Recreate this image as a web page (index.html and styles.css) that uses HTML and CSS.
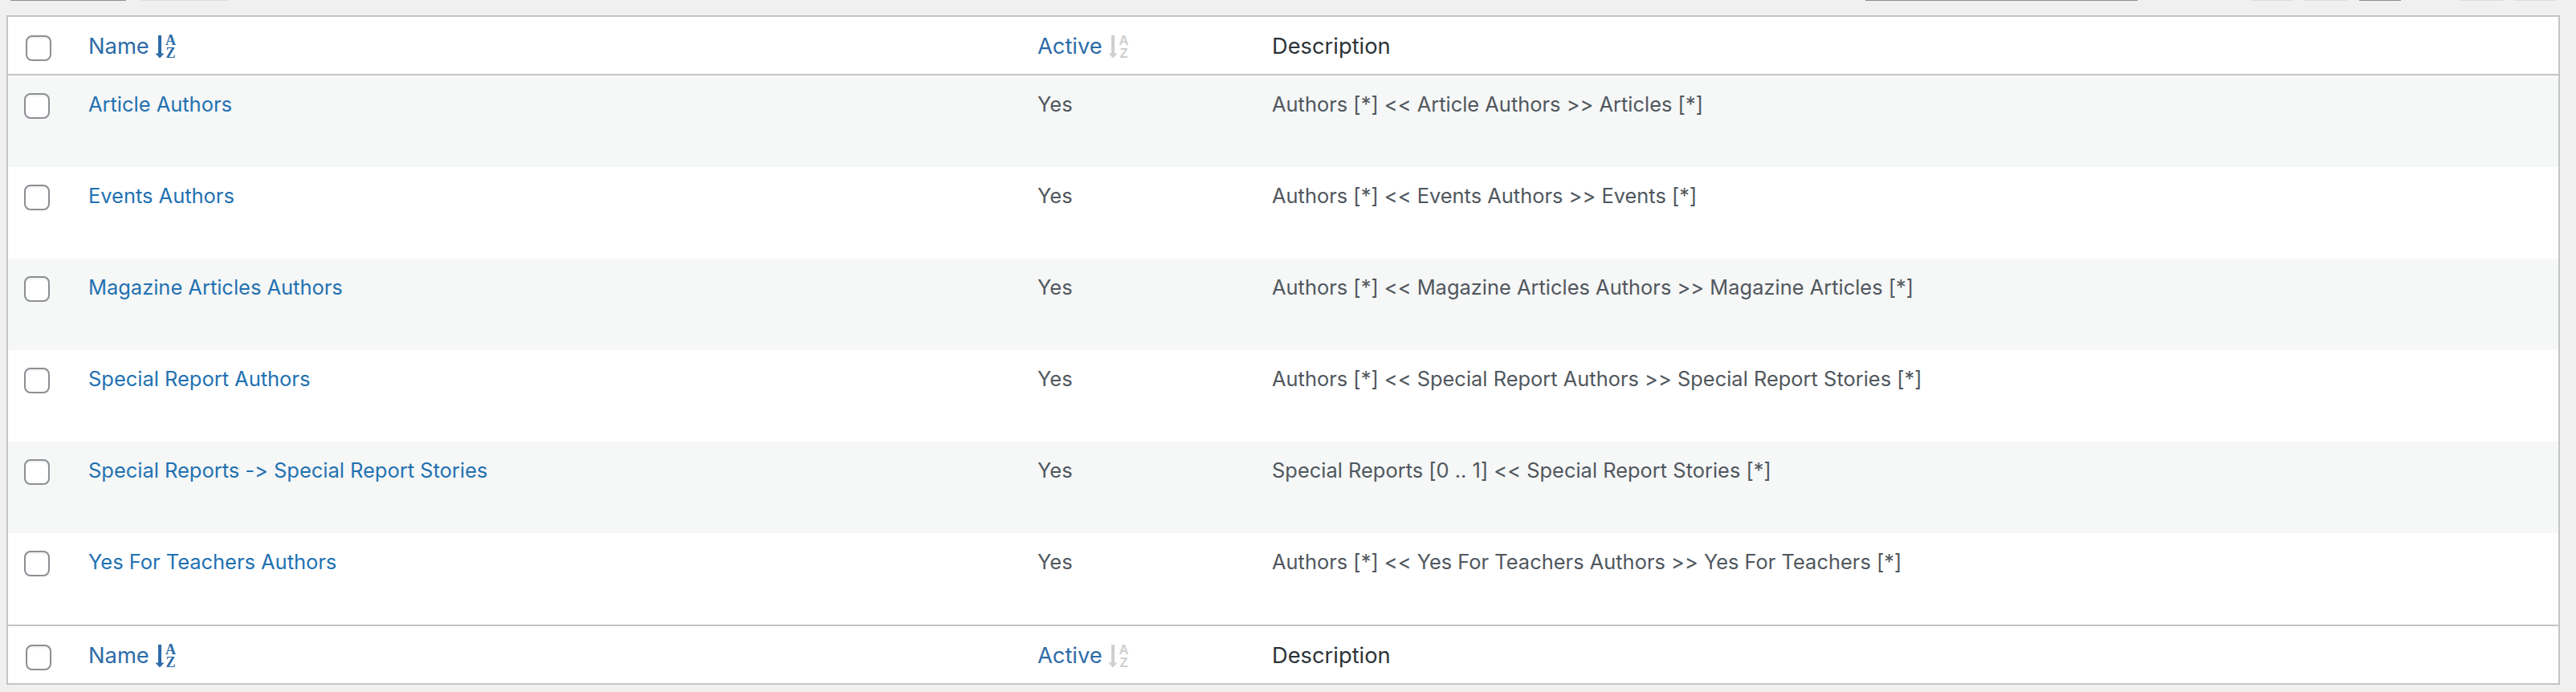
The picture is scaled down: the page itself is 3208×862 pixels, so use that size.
FILE: index.html
```html
<!DOCTYPE html>
<html lang="en">
<head>
<meta charset="utf-8">
<title>Relationships</title>
<link rel="stylesheet" href="styles.css">
</head>
<body>
<div class="page">
  <div class="tablenav-edge">
    <span class="edge edge-dark edge-a"></span>
    <span class="edge edge-light edge-b"></span>
    <span class="edge edge-dark edge-c"></span>
    <span class="edge edge-light edge-d"></span>
    <span class="edge edge-light edge-e"></span>
    <span class="edge edge-dark edge-f"></span>
    <span class="edge edge-light edge-g"></span>
    <span class="edge edge-light edge-e"></span>
  </div>
  <table class="list">
    <colgroup>
      <col class="col-check"><col class="col-name"><col class="col-active"><col class="col-desc">
    </colgroup>
    <thead>
      <tr>
        <th class="check"><input class="box" type="checkbox" aria-label="Select all"></th>
        <th><a class="sort" href="#">Name<svg class="sort-icon" viewBox="0 -6 28 42"><path d="M4 1h4v22.500h3.500L6 29.500 .5 23.500H4z" fill="currentColor"/><text x="19.500" y="13" class="glyph-serif" text-anchor="middle">A</text><text x="19.500" y="29" class="glyph-serif" text-anchor="middle">Z</text></svg></a></th>
        <th><a class="sort" href="#">Active<svg class="sort-icon sort-icon-off" viewBox="0 -6 28 42"><path d="M4 1h4v22.500h3.500L6 29.500 .5 23.500H4z" fill="currentColor"/><text x="19.500" y="13" class="glyph-sans" text-anchor="middle">A</text><text x="19.500" y="29" class="glyph-sans" text-anchor="middle">Z</text></svg></a></th>
        <th class="plain">Description</th>
      </tr>
    </thead>
    <tbody>
      <tr>
        <td class="check"><input class="box" type="checkbox" aria-label="Select"></td>
        <td><a class="rowlink" href="#">Article Authors</a></td>
        <td>Yes</td>
        <td>Authors [*] &lt;&lt; Article Authors &gt;&gt; Articles [*]</td>
      </tr>
      <tr>
        <td class="check"><input class="box" type="checkbox" aria-label="Select"></td>
        <td><a class="rowlink" href="#">Events Authors</a></td>
        <td>Yes</td>
        <td>Authors [*] &lt;&lt; Events Authors &gt;&gt; Events [*]</td>
      </tr>
      <tr>
        <td class="check"><input class="box" type="checkbox" aria-label="Select"></td>
        <td><a class="rowlink" href="#">Magazine Articles Authors</a></td>
        <td>Yes</td>
        <td>Authors [*] &lt;&lt; Magazine Articles Authors &gt;&gt; Magazine Articles [*]</td>
      </tr>
      <tr>
        <td class="check"><input class="box" type="checkbox" aria-label="Select"></td>
        <td><a class="rowlink" href="#">Special Report Authors</a></td>
        <td>Yes</td>
        <td>Authors [*] &lt;&lt; Special Report Authors &gt;&gt; Special Report Stories [*]</td>
      </tr>
      <tr>
        <td class="check"><input class="box" type="checkbox" aria-label="Select"></td>
        <td><a class="rowlink" href="#">Special Reports -&gt; Special Report Stories</a></td>
        <td>Yes</td>
        <td>Special Reports [0 .. 1] &lt;&lt; Special Report Stories [*]</td>
      </tr>
      <tr>
        <td class="check"><input class="box" type="checkbox" aria-label="Select"></td>
        <td><a class="rowlink" href="#">Yes For Teachers Authors</a></td>
        <td>Yes</td>
        <td>Authors [*] &lt;&lt; Yes For Teachers Authors &gt;&gt; Yes For Teachers [*]</td>
      </tr>
    </tbody>
    <tfoot>
      <tr>
        <th class="check"><input class="box" type="checkbox" aria-label="Select all"></th>
        <th><a class="sort" href="#">Name<svg class="sort-icon" viewBox="0 -6 28 42"><path d="M4 1h4v22.500h3.500L6 29.500 .5 23.500H4z" fill="currentColor"/><text x="19.500" y="13" class="glyph-serif" text-anchor="middle">A</text><text x="19.500" y="29" class="glyph-serif" text-anchor="middle">Z</text></svg></a></th>
        <th><a class="sort" href="#">Active<svg class="sort-icon sort-icon-off" viewBox="0 -6 28 42"><path d="M4 1h4v22.500h3.500L6 29.500 .5 23.500H4z" fill="currentColor"/><text x="19.500" y="13" class="glyph-sans" text-anchor="middle">A</text><text x="19.500" y="29" class="glyph-sans" text-anchor="middle">Z</text></svg></a></th>
        <th class="plain">Description</th>
      </tr>
    </tfoot>
  </table>
</div>
</body>
</html>
```
FILE: styles.css
```css
* { box-sizing: border-box; }
html, body { margin: 0; padding: 0; }
body {
  background: #f0f0f1;
  color: #50575e;
  font-family: Inter, "Liberation Sans", sans-serif;
  font-size: 25.45px;
  font-variant-ligatures: none;
  font-feature-settings: "calt" 0;
  line-height: 39px;
  height: 862px;
  overflow: hidden;
}
.page { padding: 0 20px 0 8px; }

.tablenav-edge { display: flex; height: 19px; align-items: flex-start; }
.edge { display: block; height: 1px; }
.edge-dark { background: #8c8f94; }
.edge-light { background: #dcdcde; }
.edge-a { width: 144px; margin-left: 5px; }
.edge-b { width: 107px; margin-left: 19px; }
.edge-c { width: 339px; margin-left: 2040px; }
.edge-d { width: 53px; margin-left: 141px; }
.edge-e { width: 53px; margin-left: 14px; }
.edge-f { width: 52px; margin-left: 15px; }
.edge-g { width: 53px; margin-left: 74px; }

.list {
  width: 100%;
  table-layout: fixed;
  border-collapse: separate;
  border-spacing: 0;
  background: #fff;
  border: 2px solid #c3c4c7;
}
.col-check { width: 81px; }
.col-name { width: 1182px; }
.col-active { width: 292px; }

th, td {
  padding: 16px 20px 16px 19px;
  text-align: left;
  vertical-align: top;
  font-weight: 400;
}
th { font-size: 27.3px; padding: 17px 20px 15px 19px; }
thead th { height: 73px; border-bottom: 2px solid #c3c4c7; }
tfoot th { height: 73px; border-top: 2px solid #c3c4c7; }
td { height: 114px; }
tbody tr:nth-child(odd) td { background: #f6f7f7; }

.plain { color: #2c3338; }
.sort { display: inline-flex; align-items: center; color: #2e6ca8; text-decoration: none; }
.rowlink { color: #2271b1; text-decoration: none; }

.sort-icon { flex: none; width: 28px; height: 42px; margin: -6px 0 -6px 7px; color: #2e6ca8; }
.sort-icon-off { color: #cfcfcf; }
.glyph-serif { font: 700 18px "Liberation Serif", serif; fill: currentColor; }
.glyph-sans { font: 700 16.5px "Liberation Sans", sans-serif; fill: currentColor; }

th.check, td.check { padding: 0; }
.box {
  appearance: none;
  display: block;
  width: 32px;
  height: 32px;
  margin: 0;
  background: #fff;
  border: 2px solid #8c8f94;
  border-radius: 8px;
  box-shadow: inset 0 2px 2px rgba(0, 0, 0, .06);
}
th.check .box { margin: 23px 0 0 22px; }
td.check .box { margin: 22px 0 0 20px; }
```
